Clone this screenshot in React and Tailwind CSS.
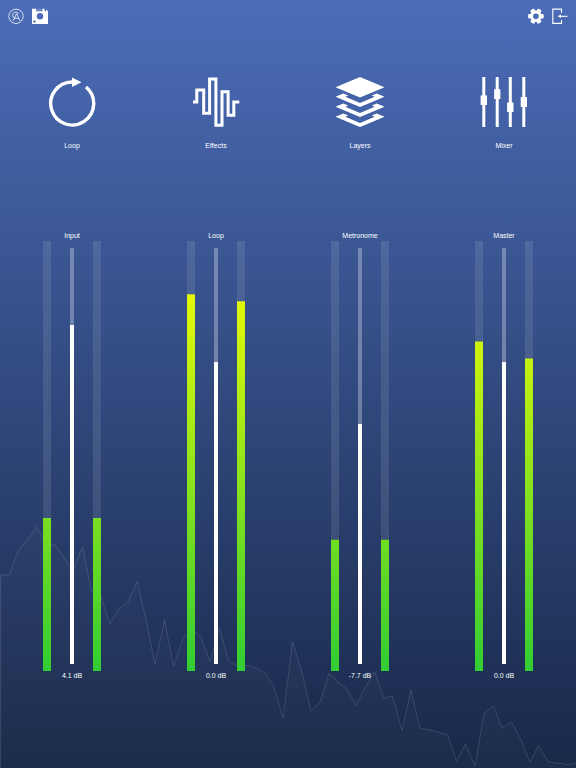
import { useState } from 'react';

const sections = [
  { name: 'Loop', icon: LoopIcon },
  { name: 'Effects', icon: EffectsIcon },
  { name: 'Layers', icon: LayersIcon },
  { name: 'Mixer', icon: MixerIcon },
];

// level: fader position in %, left/right: meter peaks in %
const channels = [
  { id: 'input', name: 'Input', gain: '4.1 dB', level: 81.5, left: 35.6, right: 35.6 },
  { id: 'loop', name: 'Loop', gain: '0.0 dB', level: 72.6, left: 87.6, right: 86 },
  { id: 'metronome', name: 'Metronome', gain: '-7.7 dB', level: 57.6, left: 30.5, right: 30.5 },
  { id: 'master', name: 'Master', gain: '0.0 dB', level: 72.6, left: 76.6, right: 72.7 },
];

const wave =
  '0.5,55 9.5,55 18.5,30 27.5,20 37,7 46,24 55,25 64,38 73,50 82.5,27 91.5,71 100.5,76 110,104 119,88.5 128,82 137,61.5 146,99 155,144.5 164.5,100 173.5,146 183,118 192,109 201,117 210,141.5 219.5,107.5 228.5,141 238,146 247,145.5 256,148 265,153 274,167 283,198 292.5,122 301.5,151 311,190.5 320,182.5 329,153 338,162 347,169 356,185 365,168 374.5,151.5 384,178 392.5,176 402,210.5 411,170 420,208.5 430,210 438,212 447.5,215 456.5,241 465.5,224 475,246 484,194 493,185.5 502,208 511.5,202 521,219.5 530,242.5 538.5,225.5 548,241.5 557,243 567,244.5 576,243';

function LogoIcon() {
  return (
    <svg viewBox="0 0 16 16" className="w-4 h-4" fill="none" stroke="white" strokeWidth="0.8">
      <circle cx="8" cy="8.3" r="7.2" />
      <path d="M10.6 5.5A3.7 3.7 0 0 0 6.4 4.3A3.2 3.2 0 0 0 4.6 7.7A3.2 3.2 0 0 0 6.6 9.9" />
      <path d="M5 12.9L8.6 5.7L12 12.9M6.2 10.3H10.8" />
    </svg>
  );
}

function SaveIcon() {
  return (
    <svg viewBox="0 0 16 16" className="w-4 h-4">
      <path
        fill="white"
        fillRule="evenodd"
        d="M0 0.8H4.2V3.3H10.4V0.8H12.6V3.3H14V1.5L16 3.3V16H0ZM8 5A3.2 3.2 0 1 0 8 11.4A3.2 3.2 0 1 0 8 5ZM1.4 12.4V14.6H3.6V12.4Z"
      />
      <path d="M5 0.8H9.6V2.4H5Z" fill="white" opacity="0.25" />
    </svg>
  );
}

function GearIcon() {
  return (
    <svg viewBox="0 0 16 16" className="w-4 h-4">
      <g fill="white">
        <rect x="5.7" y="0.4" width="4.4" height="15.6" rx="1" transform="rotate(30 7.9 8.2)" />
        <rect x="5.7" y="0.4" width="4.4" height="15.6" rx="1" transform="rotate(90 7.9 8.2)" />
        <rect x="5.7" y="0.4" width="4.4" height="15.6" rx="1" transform="rotate(150 7.9 8.2)" />
      </g>
      <circle cx="7.9" cy="8.2" r="4.3" fill="#4a6bb5" stroke="white" strokeWidth="3" />
    </svg>
  );
}

function ExitIcon() {
  return (
    <svg viewBox="0 0 16 16" className="w-4 h-4" fill="none" stroke="white">
      <path d="M9.5 4.8V1.1H0.8V15.4H9.5V12" strokeWidth="1.1" />
      <path d="M8 8.3H15.5" strokeWidth="1.1" />
      <path d="M5.6 8.3L9 6.5V10.1Z" fill="white" stroke="none" />
    </svg>
  );
}

function LoopIcon() {
  return (
    <svg viewBox="0 0 50 50" className="w-[50px] h-[50px]">
      <path d="M25 5A21.5 21.5 0 1 0 39 10" fill="none" stroke="white" strokeWidth="3.4" />
      <path d="M25 0.5V10L34.5 5.2Z" fill="white" />
    </svg>
  );
}

function EffectsIcon() {
  return (
    <svg viewBox="0 0 50 50" className="w-[50px] h-[50px]">
      <path
        d="M2 25H5.8V13.1H12.7V36.2H18.6V2H24.9V48.2H31V14.8H37.1V38.2H42.8V25H48.3"
        fill="none"
        stroke="white"
        strokeWidth="3"
      />
    </svg>
  );
}

function LayersIcon() {
  return (
    <svg viewBox="0 0 50 50" className="w-[50px] h-[50px]" fill="white">
      <path d="M25 0L49.5 10.3L25 20.6L0.5 10.3Z" />
      {[19.8, 29.8, 39.8].map((y) => (
        <path
          key={y}
          transform={`translate(0 ${y})`}
          d="M0.5 0L8.3 -3.3L13.2 -1.2L10.3 0L25 6.2L39.7 0L36.8 -1.2L41.7 -3.3L49.5 0L25 10.3Z"
        />
      ))}
    </svg>
  );
}

function MixerIcon() {
  return (
    <svg viewBox="0 0 50 50" className="w-[50px] h-[50px]" fill="white">
      <path d="M3.3 0H6.3V50H3.3ZM16.7 0H19.7V50H16.7ZM29.8 0H32.8V50H29.8ZM43.3 0H46.3V50H43.3Z" />
      <path d="M1.6 18.5H8V28H1.6ZM15.1 12.2H21.4V22H15.1ZM28.1 25.5H34.5V35H28.1ZM41.7 20H48V30H41.7Z" />
    </svg>
  );
}

function Meter({ label, value }) {
  return (
    <div role="meter" aria-label={label} aria-valuenow={value} className="w-2 bg-white/10">
      <div
        className="h-full bg-[linear-gradient(to_top,#32cd32,#ffff00)]"
        style={{ clipPath: `inset(${100 - value}% 0 0 0)` }}
      />
    </div>
  );
}

function Channel({ channel }) {
  const [level, setLevel] = useState(channel.level);

  return (
    <div className="flex flex-col items-center">
      <label htmlFor={channel.id} className="leading-[10px]">{channel.name}</label>
      <div className="flex flex-1 gap-[19px]">
        <Meter label={`${channel.name} left`} value={channel.left} />
        <div className="relative w-1 my-[7px]">
          <input
            id={channel.id}
            type="range"
            min="0"
            max="100"
            step="0.1"
            value={level}
            onChange={(e) => setLevel(Number(e.target.value))}
            className="absolute inset-0 block w-full h-full appearance-none cursor-pointer [direction:rtl] [writing-mode:vertical-lr] [&::-webkit-slider-thumb]:appearance-none [&::-webkit-slider-thumb]:w-1 [&::-webkit-slider-thumb]:h-1 [&::-webkit-slider-thumb]:bg-transparent"
            style={{
              background: `linear-gradient(to top, #fff ${level}%, rgba(255,255,255,0.3) ${level}%)`,
            }}
          />
        </div>
        <Meter label={`${channel.name} right`} value={channel.right} />
      </div>
      <output htmlFor={channel.id} className="leading-[10px]">{channel.gain}</output>
    </div>
  );
}

export default function App() {
  return (
    <div className="relative flex flex-col min-h-screen overflow-hidden bg-linear-to-b/srgb from-[#4b6cb7] to-[#182848] font-['Liberation_Sans',Arial,sans-serif] text-[7px] text-white">
      <svg
        viewBox="0 0 576 248"
        preserveAspectRatio="none"
        className="absolute bottom-0 left-0 w-full h-[248px]"
      >
        <polygon points={`0.5,248 ${wave} 576,248`} fill="white" fillOpacity="0.02" />
        <polyline points={`0.5,248 ${wave}`} fill="none" stroke="white" strokeOpacity="0.12" />
      </svg>

      <header className="relative flex justify-between p-2">
        <div className="flex gap-2">
          <button aria-label="About"><LogoIcon /></button>
          <button aria-label="Save"><SaveIcon /></button>
        </div>
        <div className="flex gap-2">
          <button aria-label="Settings"><GearIcon /></button>
          <button aria-label="Exit"><ExitIcon /></button>
        </div>
      </header>

      <nav className="relative grid grid-cols-4 mt-[45px]">
        {sections.map(({ name, icon: Icon }) => (
          <button key={name} className="flex flex-col items-center gap-[14px] justify-self-center">
            <Icon />
            <span className="leading-[10px]">{name}</span>
          </button>
        ))}
      </nav>

      <main className="relative grid flex-1 grid-cols-4 mt-20 pb-[87px]">
        {channels.map((channel) => (
          <Channel key={channel.id} channel={channel} />
        ))}
      </main>
    </div>
  );
}
